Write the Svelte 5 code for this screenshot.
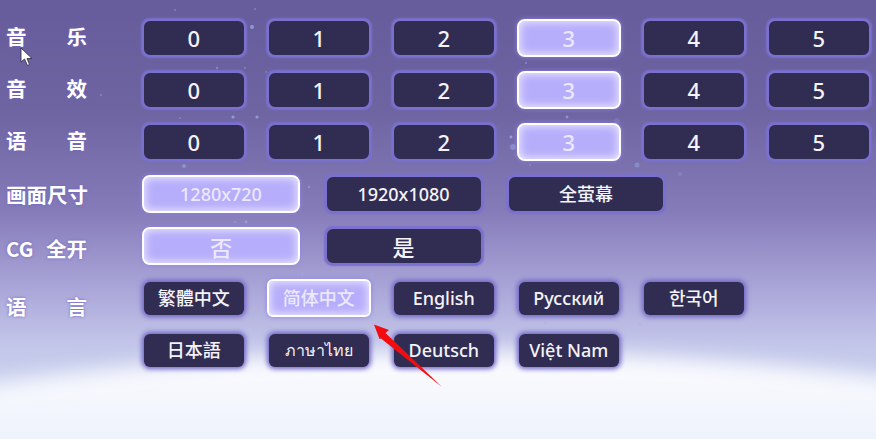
<script lang="ts">
	const levels = ['0', '1', '2', '3', '4', '5'];
	const volumeRows = [
		{ label: ['音', '乐'] },
		{ label: ['音', '效'] },
		{ label: ['语', '音'] }
	];
	const sizes = ['1280x720', '1920x1080', '全萤幕'];
	const langs = [
		'繁體中文', '简体中文', 'English', 'Русский', '한국어',
		'日本語', 'ภาษาไทย', 'Deutsch', 'Việt Nam'
	];

	// 背景の星 [x, y, r, opacity]
	const stars = [
		[252, 27, 2, 0.7], [175, 10, 1, 0.45], [255, 9, 1, 0.45], [217, 68, 1.2, 0.5], [245, 68, 1, 0.4],
		[233, 117, 1.6, 0.7], [257, 117, 1.6, 0.7], [101, 95, 1.2, 0.35], [180, 118, 1, 0.4], [266, 72, 1, 0.4],
		[526, 63, 1, 0.5], [567, 117, 1.4, 0.6], [511, 137, 1.4, 0.7], [513, 147, 3, 0.45], [637, 165, 2.5, 0.4],
		[617, 121, 3, 0.2], [680, 174, 2, 0.25], [493, 131, 1, 0.4], [530, 165, 1, 0.4],
		[184, 166, 2, 0.5], [246, 222, 1.4, 0.6], [309, 187, 1.2, 0.5], [235, 222, 1, 0.4], [302, 274, 1.2, 0.4],
		[123, 321, 1, 0.4], [372, 274, 1, 0.4], [640, 324, 1.4, 0.4], [545, 323, 1, 0.4]
	];
</script>

<main class="page">
	<svg class="stars" width="876" height="439" aria-hidden="true">
		{#each stars as [x, y, r, o]}
			<circle cx={x} cy={y} {r} fill="#9db4f4" opacity={o} />
		{/each}
	</svg>
	<div class="planet"></div>

	<div class="rows">
		{#each volumeRows as row}
			<div class="row">
				<div class="label up"><span>{row.label[0]}</span><span>{row.label[1]}</span></div>
				<div class="opts levels">
					{#each levels as n}
						<button class="opt num" class:on={n === '3'}>{n}</button>
					{/each}
				</div>
			</div>
		{/each}

		<div class="row">
			<div class="label"><span>画面尺寸</span></div>
			<div class="opts wide">
				{#each sizes as s, i}
					<button class="opt" class:on={i === 0}>{s}</button>
				{/each}
			</div>
		</div>

		<div class="row">
			<div class="label down"><span>CG</span><span>全开</span></div>
			<div class="opts wide">
				<button class="opt big on">否</button>
				<button class="opt big">是</button>
			</div>
		</div>

		<div class="row lang-row">
			<div class="label"><span>语</span><span>言</span></div>
			<div class="opts levels langs">
				{#each langs as l, i}
					<button
						class="opt glow"
						class:on={l === '简体中文'}
						class:thai={l === 'ภาษาไทย'}
						class:second={i === 5}>{l}</button>
				{/each}
			</div>
		</div>
	</div>

	<svg class="arrow" width="876" height="439" aria-hidden="true">
		<path d="M374 324.500 L389 330 L385.500 333 L442 387 L381 338.500 L379.500 339 Z" fill="#f30d10" />
	</svg>
	<svg class="cursor" width="14" height="20" viewBox="0 0 14 20" aria-hidden="true">
		<path d="M1 1 L1 15 L4.500 12 L7.500 18.500 L9.500 17.500 L7 11.500 L12 11.500 Z" fill="#fff" stroke="#2b2738" stroke-width="0.8" />
	</svg>
</main>

<style>
	:global(body) {
		margin: 0;
	}
	.page {
		position: relative;
		width: 876px;
		height: 439px;
		overflow: hidden;
		font-family: 'Noto Sans', 'Noto Sans CJK SC', sans-serif;
		background: linear-gradient(
			180deg,
			#675c9b 0%,
			#6f64a2 25%,
			#857bb9 48%,
			#a9a4d7 65%,
			#c2c5e9 78%,
			#ccd6f0 90%,
			#d4dff4 100%
		);
	}
	.stars {
		position: absolute;
		inset: 0;
	}
	.planet {
		position: absolute;
		left: -340px;
		top: 352px;
		width: 1600px;
		height: 340px;
		border-radius: 50%;
		background: linear-gradient(180deg, #fbfbfe 0%, #f7f8fd 10%, #eff3fc 24%);
		filter: blur(10px);
	}
	.rows {
		position: relative;
		display: grid;
		gap: 14px;
		padding: 19px 5px 0 6px;
	}
	.row {
		display: grid;
		grid-template-columns: 81px 1fr;
		column-gap: 55px;
		align-items: center;
	}
	.label {
		display: flex;
		justify-content: space-between;
		font-family: 'Noto Sans CJK SC', sans-serif;
		font-size: 20.500px;
		font-weight: 700;
		line-height: 28px;
		white-space: nowrap;
		color: #fff;
		text-shadow: 0 0 3px #6f62c4;
	}
	.up {
		margin-bottom: 4px;
	}
	.down {
		margin-top: 3px;
	}
	.opts {
		display: grid;
	}
	.levels {
		grid-template-columns: repeat(6, 103.500px);
		column-gap: 21.500px;
	}
	.wide {
		grid-template-columns: repeat(3, 158px);
		column-gap: 24.500px;
	}
	.langs {
		row-gap: 14px;
	}
	.second {
		grid-column: 1;
	}
	.lang-row {
		align-items: start;
	}
	.lang-row .label {
		margin-top: 13px;
	}
	.opt {
		box-sizing: border-box;
		height: 38px;
		padding: 0;
		border: 2px solid #7a70cd;
		border-radius: 8px;
		background: #312d52;
		color: #f4f3f8;
		font-family: 'Noto Sans', 'Noto Sans CJK SC', sans-serif;
		font-size: 18px;
		font-weight: 500;
		line-height: 1;
		box-shadow: 0 0 1.500px 0.500px #7a70cd;
	}
	.num,
	.big {
		font-size: 22px;
	}
	.big {
		padding-top: 2px;
	}
	.on {
		border: 2px solid #fff;
		background: #b6aefb;
		color: #ece9ff;
		box-shadow:
			inset 0 0 9px 1px #efeaff,
			0 0 4px #8f84e6;
	}
	.glow {
		height: 33px;
		margin: 2.500px 2px;
		border: none;
		border-radius: 6px;
		box-shadow: 0 0 5px 2px #6e63c6;
	}
	.glow.on {
		height: 38px;
		margin: 0;
		border: 2px solid #fff;
		box-shadow:
			inset 0 0 9px 1px #efeaff,
			0 0 5px #8f84e6;
	}
	.thai {
		font-size: 16px;
	}
	.arrow {
		position: absolute;
		inset: 0;
		pointer-events: none;
	}
	.cursor {
		position: absolute;
		left: 20px;
		top: 47px;
	}
</style>
